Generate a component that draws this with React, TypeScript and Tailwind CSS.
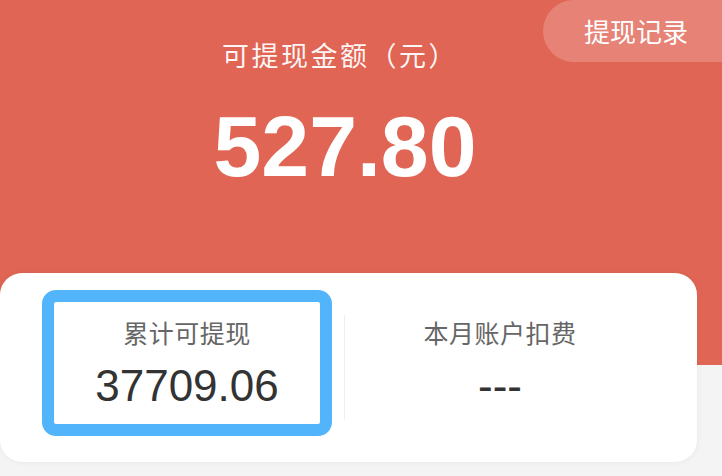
import React from 'react';

const font = { fontFamily: '"Noto Sans CJK SC", "Liberation Sans", sans-serif' };
const numFont = { fontFamily: '"Liberation Sans", Arial, sans-serif' };

const App: React.FC = () => {
  return (
    <div className="w-[722px] h-[476px] overflow-hidden bg-[#f4f4f4] relative" style={font}>
      {/* 顶部红色区域 */}
      <div className="h-[365px] bg-[#e06554] relative">
        <button className="absolute top-0 left-[543px] w-[200px] h-[62px] rounded-l-full bg-white/20 text-white text-[26px] pl-[41px] text-left leading-[62px]">
          提现记录
        </button>
        <div className="w-[690px] pt-[34px] flex flex-col items-center text-white">
          <div className="text-[27px] leading-[42px] tracking-[2.5px] text-white/95 pr-[10px]">可提现金额（元）</div>
          <div className="mt-[20px] text-[86px] leading-[100px] font-bold" style={numFont}>
            527.80
          </div>
        </div>
      </div>

      {/* 统计卡片 */}
      <div className="-mt-[92px] w-[697px] h-[189px] bg-white rounded-[22px] shadow-[0_0_6px_rgba(0,0,0,0.06)] relative flex items-start pt-[17px] pl-[42px]">
        <div className="w-[290px] h-[146px] border-[12px] border-[#52b4fb] rounded-[14px] flex flex-col items-center pt-[13px]">
          <div className="text-[25px] leading-[34px] text-[#666] tracking-[0.5px]">累计可提现</div>
          <div className="mt-[14px] text-[44px] leading-[46px] text-[#333]" style={numFont}>
            37709.06
          </div>
        </div>
        <div className="ml-[12px] mt-[25px] w-px h-[105px] bg-[#eeeeee]" />
        <div className="ml-[10px] w-[290px] h-[146px] flex flex-col items-center pt-[25px]">
          <div className="text-[25px] leading-[34px] text-[#666] tracking-[0.5px]">本月账户扣费</div>
          <div className="mt-[14px] text-[44px] leading-[46px] text-[#333]" style={numFont}>
            ---
          </div>
        </div>
      </div>
    </div>
  );
};

export default App;
